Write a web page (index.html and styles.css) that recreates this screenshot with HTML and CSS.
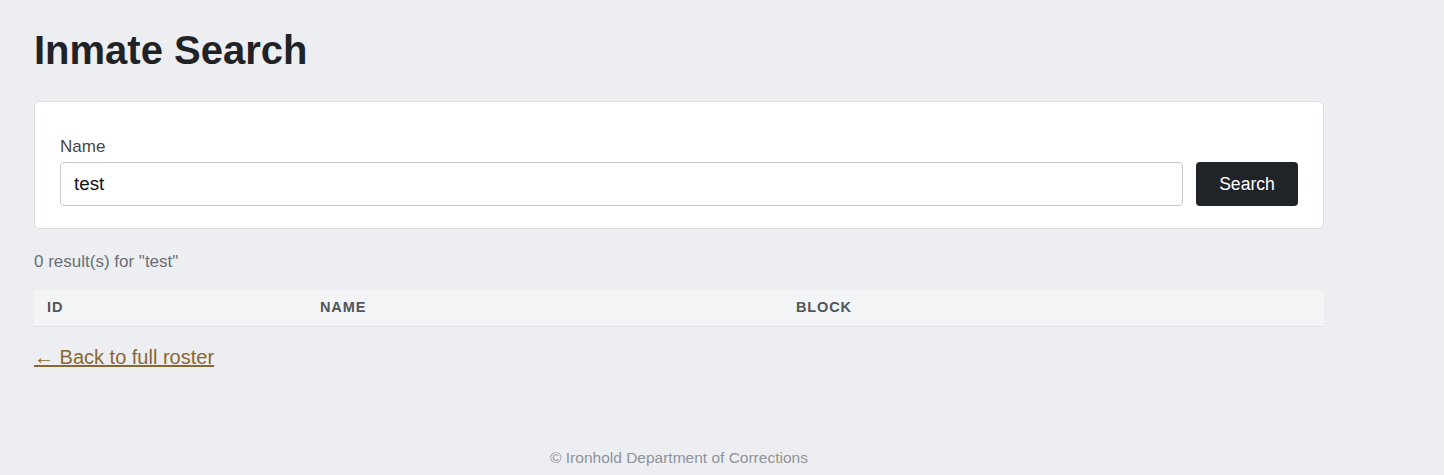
FILE: index.html
```html
<!DOCTYPE html>
<html lang="en">
<head>
<meta charset="utf-8">
<title>Inmate Search</title>
<link rel="stylesheet" href="styles.css">
</head>
<body>
<div class="page">
  <h1 class="title">Inmate Search</h1>
  <form class="card search-form">
    <label class="field-label" for="q">Name</label>
    <div class="search-row">
      <input class="search-input" id="q" type="text" value="test">
      <button class="search-btn" type="button">Search</button>
    </div>
  </form>
  <p class="result-count">0 result(s) for "test"</p>
  <table class="results">
    <thead>
      <tr>
        <th class="col-id">ID</th>
        <th class="col-name">Name</th>
        <th class="col-block">Block</th>
      </tr>
    </thead>
    <tbody></tbody>
  </table>
  <a class="back-link" href="#">← Back to full roster</a>
  <footer class="footer">© Ironhold Department of Corrections</footer>
</div>
</body>
</html>
```
FILE: styles.css
```css
* { box-sizing: border-box; }
html, body { margin: 0; padding: 0; }
body {
  background: #edeef2;
  font-family: "Liberation Sans", Arial, sans-serif;
  font-size: 17px;
  color: #1f2328;
}
.page {
  width: 1358px;
  padding: 26px 34px 0 34px;
  display: flex;
  flex-direction: column;
  align-items: stretch;
}
.title {
  margin: 0 0 27px 0;
  font-size: 40px;
  line-height: 48px;
  font-weight: 700;
  color: #1f2328;
}
.card {
  background: #ffffff;
  border: 1px solid #d9dbdf;
  border-radius: 5px;
}
.search-form {
  padding: 33px 25px 22px 25px;
  display: flex;
  flex-direction: column;
  margin: 0;
}
.field-label {
  display: block;
  font-size: 17px;
  line-height: 24px;
  color: #444649;
  margin-bottom: 3px;
}
.search-row {
  display: flex;
  gap: 13px;
}
.search-input {
  flex: 1;
  height: 44px;
  border: 1px solid #c9cbcf;
  border-radius: 4px;
  padding: 0 13px;
  font-family: "Liberation Sans", Arial, sans-serif;
  font-size: 18.8px;
  color: #111;
  background: #fff;
}
.search-btn {
  height: 44px;
  width: 102px;
  border: none;
  border-radius: 4px;
  background: #202328;
  color: #fff;
  font-family: "Liberation Sans", Arial, sans-serif;
  font-size: 17.6px;
  padding: 0;
}
.result-count {
  margin: 21px 0 0 0;
  font-size: 17px;
  line-height: 24px;
  color: #6a6e75;
}
.results {
  margin-top: 16px;
  width: 100%;
  border-collapse: collapse;
  table-layout: fixed;
}
.results th {
  background: #f3f4f6;
  border-bottom: 1px solid #dfe1e5;
  text-align: left;
  font-size: 14.5px;
  letter-spacing: 0.06em;
  text-transform: uppercase;
  font-weight: 700;
  color: #51555d;
  height: 36px;
  padding: 0 13px 1px 13px;
}
.col-id { width: 273px; }
.col-name { width: 476px; }
.back-link {
  align-self: flex-start;
  margin-top: 18px;
  font-size: 20px;
  line-height: 24px;
  color: #8a6630;
  text-decoration: underline;
}
.footer {
  margin-top: 79px;
  text-align: center;
  font-size: 15.5px;
  line-height: 20px;
  color: #8f9399;
}
```
